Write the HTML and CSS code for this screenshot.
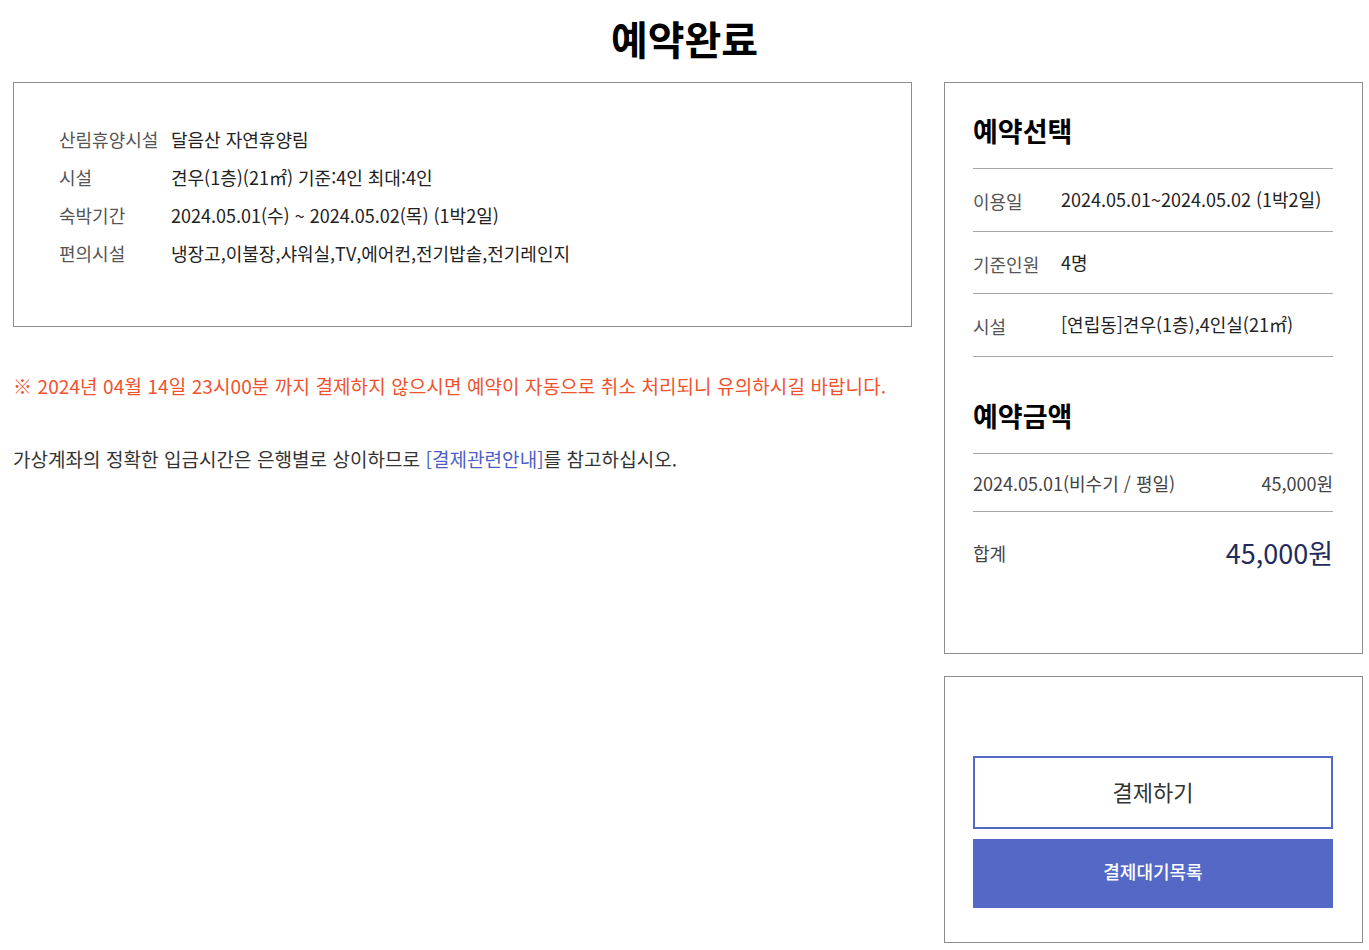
FILE: index.html
```html
<!DOCTYPE html>
<html lang="ko">
<head>
    <meta charset="UTF-8">
    <meta name="viewport" content="width=device-width, initial-scale=1.0">
    <title>예약완료</title>
    <link rel="stylesheet" href="styles.css">
</head>
<body>
    <h1 class="page-title">예약완료</h1>

    <div class="container">
        <!-- Left Column -->
        <div class="left-col">
            <div class="info-box">
                <dl class="info-row">
                    <dt>산림휴양시설</dt>
                    <dd>달음산 자연휴양림</dd>
                </dl>
                <dl class="info-row">
                    <dt>시설</dt>
                    <dd>견우(1층)(21㎡) 기준:4인 최대:4인</dd>
                </dl>
                <dl class="info-row">
                    <dt>숙박기간</dt>
                    <dd>2024.05.01(수) ~ 2024.05.02(목) (1박2일)</dd>
                </dl>
                <dl class="info-row">
                    <dt>편의시설</dt>
                    <dd>냉장고,이불장,샤워실,TV,에어컨,전기밥솥,전기레인지</dd>
                </dl>
            </div>

            <p class="notice">※ 2024년 04월 14일 23시00분 까지 결제하지 않으시면 예약이 자동으로 취소 처리되니 유의하시길 바랍니다.</p>
            <p class="guide">가상계좌의 정확한 입금시간은 은행별로 상이하므로 <a href="#" class="guide-link">[결제관련안내]</a>를 참고하십시오.</p>
        </div>

        <!-- Right Column -->
        <div class="right-col">
            <div class="side-box summary">
                <h3 class="side-title">예약선택</h3>
                <ul class="side-list">
                    <li class="side-row">
                        <span class="side-label">이용일</span>
                        <span class="side-value">2024.05.01~2024.05.02 (1박2일)</span>
                    </li>
                    <li class="side-row">
                        <span class="side-label">기준인원</span>
                        <span class="side-value">4명</span>
                    </li>
                    <li class="side-row">
                        <span class="side-label">시설</span>
                        <span class="side-value">[연립동]견우(1층),4인실(21㎡)</span>
                    </li>
                </ul>

                <h3 class="side-title price-title">예약금액</h3>
                <ul class="side-list">
                    <li class="price-row">
                        <span>2024.05.01(비수기 / 평일)</span>
                        <span>45,000원</span>
                    </li>
                </ul>
                <div class="total-row">
                    <span class="total-label">합계</span>
                    <span class="total-amount">45,000원</span>
                </div>
            </div>

            <div class="side-box actions">
                <button class="btn-pay">결제하기</button>
                <button class="btn-list">결제대기목록</button>
            </div>
        </div>
    </div>
</body>
</html>
```

FILE: styles.css
```css
/* Reset */
* {
    box-sizing: border-box;
    margin: 0;
    padding: 0;
}

body {
    font-family: "Noto Sans CJK KR", "Noto Sans", sans-serif;
    color: #222;
    background-color: #fff;
    font-size: 18px;
}

/* Title */
.page-title {
    text-align: center;
    font-size: 40px;
    font-weight: bold;
    color: #000;
    line-height: 52px;
    padding-top: 12px;
    height: 82px;
}

.container {
    display: flex;
    gap: 32px;
    padding-left: 13px;
}

/* Left Column */
.left-col {
    width: 899px;
}

.info-box {
    border: 1px solid #8c8c8c;
    height: 245px;
    padding: 37px 45px 0;
}

.info-row {
    display: flex;
    line-height: 38px;
}

.info-row dt {
    width: 112px;
    color: #555;
}

.info-row dd {
    color: #222;
}

.notice {
    margin-top: 44px;
    font-size: 19px;
    line-height: 30px;
    letter-spacing: 0.1px;
    color: #f0522e;
}

.guide {
    margin-top: 43px;
    font-size: 19px;
    line-height: 30px;
    letter-spacing: 0.05px;
    color: #333;
}

.guide-link {
    color: #4b5fc6;
    text-decoration: none;
}

/* Right Column */
.right-col {
    width: 419px;
    display: flex;
    flex-direction: column;
    gap: 22px;
}

.side-box {
    border: 1px solid #8c8c8c;
    padding: 0 29px 0 28px;
}

.summary {
    height: 572px;
    padding-top: 30px;
}

.side-title {
    font-size: 27px;
    font-weight: bold;
    color: #000;
    line-height: 36px;
    padding-bottom: 19px;
}

.price-title {
    margin-top: 41px;
}

.side-list {
    list-style: none;
    border-top: 1px solid #a6a6a6;
}

.side-row {
    display: flex;
    align-items: center;
    height: 63px;
    border-bottom: 1px solid #a6a6a6;
}

.side-row:nth-child(2) {
    height: 62px;
}

.side-label {
    width: 88px;
    color: #555;
    padding-top: 2px;
}

.side-value {
    color: #222;
    padding-bottom: 2px;
}

.price-row {
    display: flex;
    justify-content: space-between;
    align-items: center;
    height: 58px;
    border-bottom: 1px solid #a6a6a6;
    color: #444;
}

.total-row {
    display: flex;
    justify-content: space-between;
    align-items: center;
    height: 84px;
    padding-bottom: 3px;
}

.total-label {
    color: #444;
}

.total-amount {
    font-size: 27px;
    color: #1f2b5c;
}

/* Buttons */
.actions {
    height: 267px;
    padding-top: 79px;
    display: flex;
    flex-direction: column;
    gap: 10px;
}

.actions button {
    width: 100%;
    font-family: inherit;
    cursor: pointer;
}

.btn-pay {
    height: 73px;
    background: #fff;
    border: 2px solid #5468c6;
    font-size: 22px;
    color: #333;
    padding-bottom: 3px;
}

.btn-list {
    height: 69px;
    background: #5468c6;
    border: none;
    font-size: 18px;
    font-weight: 500;
    color: #fff;
    padding-bottom: 5px;
}
```
